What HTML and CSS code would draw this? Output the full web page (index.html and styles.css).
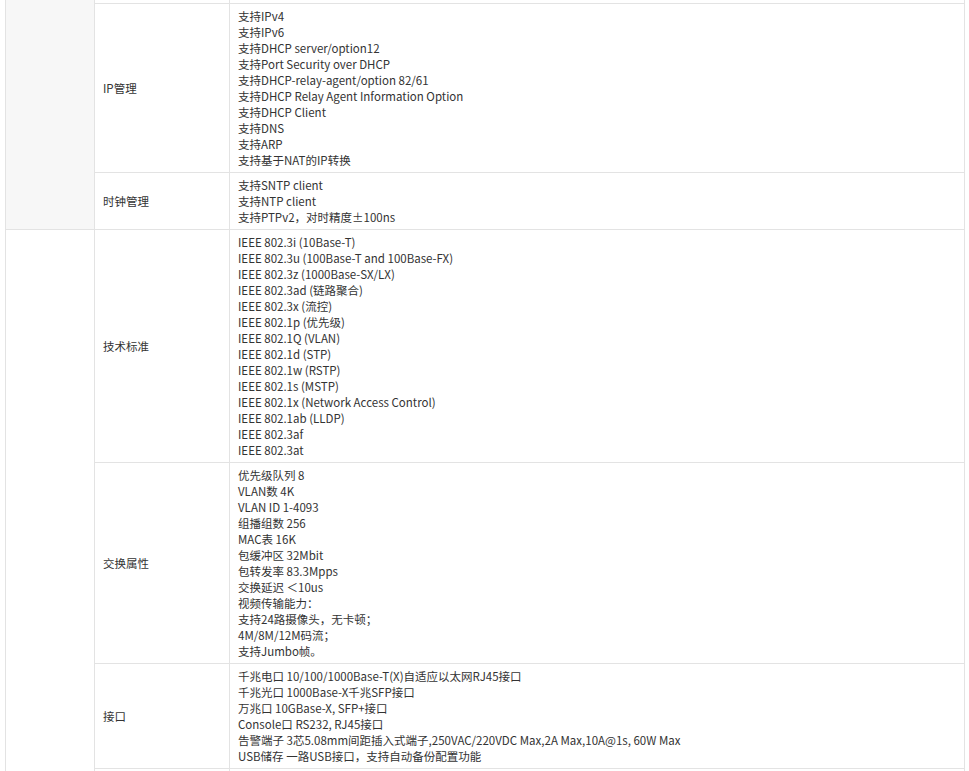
FILE: index.html
```html
<!DOCTYPE html>
<html lang="zh-CN">
<head>
    <meta charset="UTF-8">
    <meta name="viewport" content="width=device-width, initial-scale=1.0">
    <title>产品参数</title>
    <link rel="stylesheet" href="styles.css">
</head>
<body>

    <table class="spec-table">
        <colgroup>
            <col class="col-group">
            <col class="col-name">
            <col class="col-value">
        </colgroup>
        <tbody>
            <tr class="spacer-row">
                <td class="group-cell shaded" rowspan="3"></td>
                <td></td>
                <td></td>
            </tr>
            <tr>
                <td class="name-cell">IP管理</td>
                <td class="value-cell">
                    支持IPv4<br>
                    支持IPv6<br>
                    支持DHCP server/option12<br>
                    支持Port Security over DHCP<br>
                    支持DHCP-relay-agent/option 82/61<br>
                    支持DHCP Relay Agent Information Option<br>
                    支持DHCP Client<br>
                    支持DNS<br>
                    支持ARP<br>
                    支持基于NAT的IP转换
                </td>
            </tr>
            <tr>
                <td class="name-cell">时钟管理</td>
                <td class="value-cell">
                    支持SNTP client<br>
                    支持NTP client<br>
                    支持PTPv2，对时精度±100ns
                </td>
            </tr>
            <tr>
                <td class="group-cell" rowspan="4"></td>
                <td class="name-cell">技术标准</td>
                <td class="value-cell">
                    IEEE 802.3i (10Base-T)<br>
                    IEEE 802.3u (100Base-T and 100Base-FX)<br>
                    IEEE 802.3z (1000Base-SX/LX)<br>
                    IEEE 802.3ad (链路聚合)<br>
                    IEEE 802.3x (流控)<br>
                    IEEE 802.1p (优先级)<br>
                    IEEE 802.1Q (VLAN)<br>
                    IEEE 802.1d (STP)<br>
                    IEEE 802.1w (RSTP)<br>
                    IEEE 802.1s (MSTP)<br>
                    IEEE 802.1x (Network Access Control)<br>
                    IEEE 802.1ab (LLDP)<br>
                    IEEE 802.3af<br>
                    IEEE 802.3at
                </td>
            </tr>
            <tr>
                <td class="name-cell">交换属性</td>
                <td class="value-cell">
                    优先级队列 8<br>
                    VLAN数 4K<br>
                    VLAN ID 1-4093<br>
                    组播组数 256<br>
                    MAC表 16K<br>
                    包缓冲区 32Mbit<br>
                    包转发率 83.3Mpps<br>
                    交换延迟 ＜10us<br>
                    视频传输能力：<br>
                    支持24路摄像头，无卡顿；<br>
                    4M/8M/12M码流；<br>
                    支持Jumbo帧。
                </td>
            </tr>
            <tr>
                <td class="name-cell">接口</td>
                <td class="value-cell">
                    千兆电口 10/100/1000Base-T(X)自适应以太网RJ45接口<br>
                    千兆光口 1000Base-X千兆SFP接口<br>
                    万兆口 10GBase-X, SFP+接口<br>
                    Console口 RS232, RJ45接口<br>
                    告警端子 3芯5.08mm间距插入式端子,250VAC/220VDC Max,2A Max,10A@1s, 60W Max<br>
                    USB储存 一路USB接口，支持自动备份配置功能
                </td>
            </tr>
            <tr class="tail-row">
                <td></td>
                <td></td>
            </tr>
        </tbody>
    </table>

</body>
</html>
```

FILE: styles.css
```css
* {
    box-sizing: border-box;
}
body {
    margin: 0;
    padding-left: 5px;
    background: white;
    font-family: "Noto Sans CJK SC", "Noto Sans", sans-serif;
    font-size: 11.5px;
    color: #333;
}
.spec-table {
    width: 960px;
    border-collapse: collapse;
    table-layout: fixed;
}
.col-group {
    width: 89px;
}
.col-name {
    width: 135px;
}
.spec-table td {
    border: 1px solid #e3e3e3;
    padding: 4px 8px;
    line-height: 16px;
    vertical-align: middle;
    text-align: left;
}
.spacer-row td {
    height: 3px;
    padding: 0;
    border-top: none;
}
.tail-row td {
    height: 40px;
}
.group-cell {
    background: white;
}
.group-cell.shaded {
    background: #f7f7f7;
}
```
